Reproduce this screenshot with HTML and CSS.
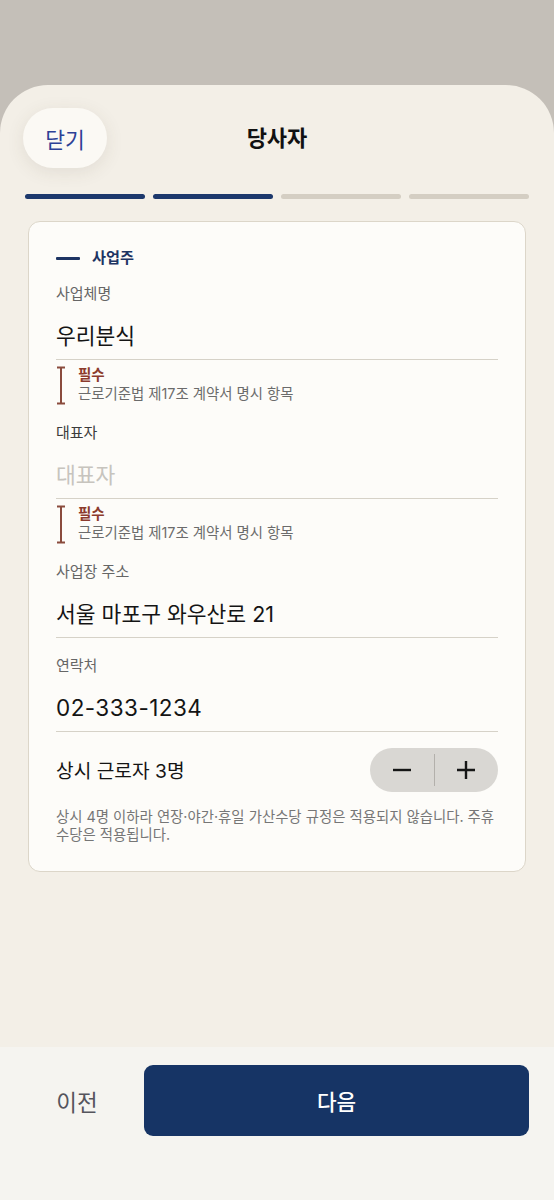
FILE: index.html
```html
<!DOCTYPE html>
<html lang="ko">
<head>
<meta charset="utf-8">
<meta name="viewport" content="width=554">
<title>당사자</title>
<link rel="stylesheet" href="styles.css">
</head>
<body>
<div class="sheet">
  <header class="topbar">
    <div class="topbar-side"><button class="close-btn" type="button">닫기</button></div>
    <h1 class="title">당사자</h1>
    <div class="topbar-side"></div>
  </header>

  <div class="progress">
    <span class="step is-done"></span>
    <span class="step is-done"></span>
    <span class="step"></span>
    <span class="step"></span>
  </div>

  <section class="card">
    <div class="section-head">
      <span class="section-rule"></span>
      <span class="section-name">사업주</span>
    </div>

    <div class="field">
      <div class="field-label">사업체명</div>
      <div class="field-value">우리분식</div>
    </div>
    <div class="req">
      <svg class="req-icon" width="10" height="39" viewBox="0 0 10 39" aria-hidden="true">
        <path d="M1 1.5H9M5 1.5V37.5M1 37.5H9" fill="none" stroke="#8a4b3d" stroke-width="2"/>
      </svg>
      <div class="req-text">
        <div class="req-title">필수</div>
        <div class="req-desc">근로기준법 제17조 계약서 명시 항목</div>
      </div>
    </div>

    <div class="field">
      <div class="field-label is-strong">대표자</div>
      <div class="field-value is-placeholder">대표자</div>
    </div>
    <div class="req">
      <svg class="req-icon" width="10" height="39" viewBox="0 0 10 39" aria-hidden="true">
        <path d="M1 1.5H9M5 1.5V37.5M1 37.5H9" fill="none" stroke="#8a4b3d" stroke-width="2"/>
      </svg>
      <div class="req-text">
        <div class="req-title">필수</div>
        <div class="req-desc">근로기준법 제17조 계약서 명시 항목</div>
      </div>
    </div>

    <div class="field">
      <div class="field-label">사업장 주소</div>
      <div class="field-value">서울 마포구 와우산로 21</div>
    </div>

    <div class="field">
      <div class="field-label">연락처</div>
      <div class="field-value is-numeric">02-333-1234</div>
    </div>

    <div class="count-row">
      <span class="count-label">상시 근로자 3명</span>
      <div class="stepper">
        <button class="stepper-btn" type="button" aria-label="감소">
          <svg width="20" height="20" viewBox="0 0 20 20" aria-hidden="true"><path d="M1 10H19" stroke="#161616" stroke-width="2.4" fill="none"/></svg>
        </button>
        <span class="stepper-divider"></span>
        <button class="stepper-btn" type="button" aria-label="증가">
          <svg width="20" height="20" viewBox="0 0 20 20" aria-hidden="true"><path d="M1 10H19M10 1V19" stroke="#161616" stroke-width="2.4" fill="none"/></svg>
        </button>
      </div>
    </div>

    <p class="note">상시 4명 이하라 연장·야간·휴일 가산수당 규정은 적용되지 않습니다. 주휴수당은 적용됩니다.</p>
  </section>

  <div class="spacer"></div>

  <footer class="bottom-bar">
    <button class="prev-btn" type="button">이전</button>
    <button class="next-btn" type="button">다음</button>
  </footer>
</div>
</body>
</html>
```

FILE: styles.css
```css
* {
  box-sizing: border-box;
}

html, body {
  margin: 0;
  padding: 0;
}

body {
  background: #c4bfb8;
  font-family: "Inter", "Noto Sans CJK KR", sans-serif;
  color: #141414;
  width: 554px;
  height: 1200px;
  overflow: hidden;
}

button {
  font-family: inherit;
  border: 0;
  cursor: pointer;
}

.sheet {
  margin-top: 85px;
  height: 1115px;
  background: #f3efe7;
  border-radius: 48px 48px 0 0;
  display: flex;
  flex-direction: column;
  overflow: hidden;
}

.topbar {
  display: grid;
  grid-template-columns: 1fr auto 1fr;
  align-items: center;
  padding: 23px 23px 0;
}

.close-btn {
  width: 84px;
  height: 60px;
  border-radius: 30px;
  background: #fbf9f4;
  color: #2d4196;
  font-size: 21.5px;
  box-shadow: 0 4px 18px rgba(80, 70, 50, 0.10);
  padding: 0;
}

.title {
  margin: 0;
  font-size: 22px;
  font-weight: 700;
  color: #111;
  line-height: 30px;
}

.progress {
  display: flex;
  gap: 8px;
  padding: 0 25px;
  margin-top: 26px;
}

.step {
  flex: 1;
  height: 5px;
  border-radius: 3px;
  background: #d4cec3;
}

.step.is-done {
  background: #1c386c;
}

.card {
  margin: 22px 28px 0;
  background: #fdfcf9;
  border: 1.5px solid #dcd6c9;
  border-radius: 12px;
  padding: 26px 27px 27px;
}

.section-head {
  display: flex;
  align-items: center;
  gap: 12px;
  height: 20px;
}

.section-rule {
  width: 24px;
  height: 3px;
  background: #1d3463;
  border-radius: 1px;
}

.section-name {
  font-size: 15.2px;
  font-weight: 700;
  color: #1d3463;
  line-height: 20px;
}

.field {
  margin-top: 18px;
}

.section-head + .field {
  margin-top: 16px;
}

.field-label {
  font-size: 15px;
  line-height: 20px;
  color: #666;
}

.field-label.is-strong {
  color: #3c3c3c;
}

.field-value {
  margin-top: 17px;
  font-size: 21.5px;
  line-height: 30px;
  color: #141414;
  padding-bottom: 8px;
  border-bottom: 1.5px solid #d6d2c8;
}

.field-value.is-numeric {
  font-size: 22.5px;
  letter-spacing: 0.02em;
}

.field-value.is-placeholder {
  color: #c7c4be;
}

.req {
  display: flex;
  gap: 12px;
  margin-top: 6px;
  height: 39px;
}

.req-icon {
  flex: none;
}

.req-title {
  font-size: 14.5px;
  font-weight: 700;
  color: #8c3b2d;
  line-height: 18px;
}

.req-desc {
  font-size: 14.4px;
  color: #6b6b6b;
  line-height: 19px;
}

.count-row {
  margin-top: 16px;
  display: flex;
  align-items: center;
  justify-content: space-between;
  height: 44px;
}

.count-label {
  font-size: 19.2px;
  color: #141414;
}

.stepper {
  width: 128px;
  height: 44px;
  border-radius: 22px;
  background: #d9d7d3;
  display: flex;
  align-items: center;
}

.stepper-btn {
  flex: 1;
  height: 44px;
  background: transparent;
  display: flex;
  align-items: center;
  justify-content: center;
  padding: 0;
}

.stepper-divider {
  width: 1px;
  height: 32px;
  background: #b3b0ab;
}

.note {
  margin: 16px 0 0;
  font-size: 14.4px;
  line-height: 18px;
  color: #767676;
}

.spacer {
  flex: 1;
}

.bottom-bar {
  height: 153px;
  background: #f5f4f0;
  display: flex;
  align-items: flex-start;
  padding: 18px 25px 0 10px;
}

.prev-btn {
  width: 134px;
  height: 71px;
  background: transparent;
  color: #55555d;
  font-size: 22.5px;
  padding: 0;
}

.next-btn {
  flex: 1;
  height: 71px;
  border-radius: 9px;
  background: #163465;
  color: #fff;
  font-size: 21.3px;
  font-weight: 500;
  padding: 0;
}
```
